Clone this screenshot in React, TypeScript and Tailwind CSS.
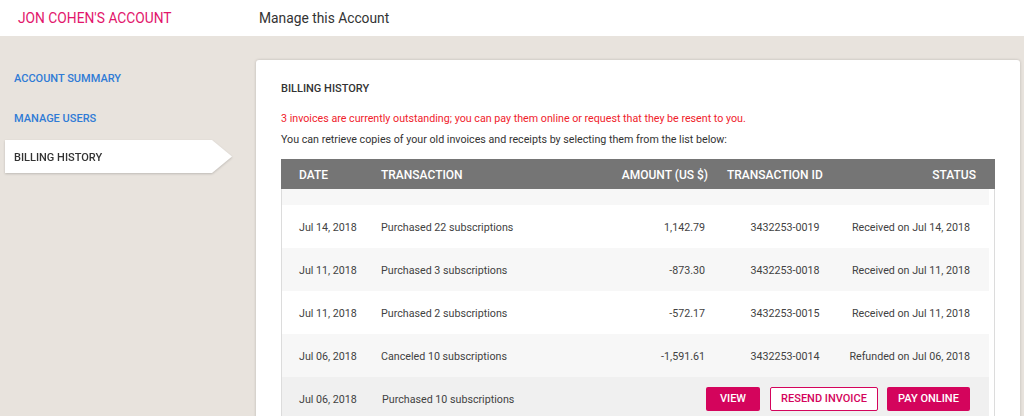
import React from "react";

const rows = [
  { date: "Jul 14, 2018", desc: "Purchased 22 subscriptions", amount: "1,142.79", id: "3432253-0019", status: "Received on Jul 14, 2018" },
  { date: "Jul 11, 2018", desc: "Purchased 3 subscriptions", amount: "-873.30", id: "3432253-0018", status: "Received on Jul 11, 2018" },
  { date: "Jul 11, 2018", desc: "Purchased 2 subscriptions", amount: "-572.17", id: "3432253-0015", status: "Received on Jul 11, 2018" },
  { date: "Jul 06, 2018", desc: "Canceled 10 subscriptions", amount: "-1,591.61", id: "3432253-0014", status: "Refunded on Jul 06, 2018" },
];

const cols = "grid grid-cols-[82px_227px_100px_19px_116px_1fr] items-center";

const App = () => {
  return (
    <div className="w-[1024px] h-[416px] overflow-hidden bg-[#e8e3dd] font-['Roboto','Liberation_Sans',sans-serif]">
      <div className="h-9 bg-white flex items-center">
        <div className="w-[259px] pl-[18px] text-[13.8px] text-[#e2156b]">JON COHEN'S ACCOUNT</div>
        <div className="text-[13.8px] text-[#333]">Manage this Account</div>
      </div>

      <div className="flex">
        <div className="w-[256px] shrink-0 pt-[23px]">
          <div className="h-10 flex items-center pl-[14px] text-[11px] font-medium text-[#2f7bd6]">ACCOUNT SUMMARY</div>
          <div className="h-10 flex items-center pl-[14px] text-[11px] font-medium text-[#2f7bd6]">MANAGE USERS</div>
          <div className="mt-[1px] ml-[5px] drop-shadow-[0_1px_1px_rgba(0,0,0,0.18)]">
            <div className="w-[227px] h-[33px] bg-white flex items-center pl-[9px] pt-[3px] text-[11px] font-medium text-[#333] [clip-path:polygon(0_0,207px_0,100%_50%,207px_100%,0_100%)]">
              BILLING HISTORY
            </div>
          </div>
        </div>

        <div className="mt-6 w-[764px] h-[400px] bg-white rounded-[3px] shadow-[0_0_3px_rgba(0,0,0,0.2)] pt-[21px] px-[25px]">
          <div className="text-[11px] leading-4 font-medium text-[#333]">BILLING HISTORY</div>
          <div className="mt-[14px] text-[10.7px] leading-4 text-[#f0222c]">
            3 invoices are currently outstanding; you can pay them online or request that they be resent to you.
          </div>
          <div className="mt-[5px] text-[10.7px] leading-4 text-[#333]">
            You can retrieve copies of your old invoices and receipts by selecting them from the list below:
          </div>

          <div className="mt-[11px]">
            <div className={`${cols} h-[30px] bg-[#757575] text-white text-[12px] font-medium pl-[18px] pr-[19px] pt-[2px]`}>
              <div>DATE</div>
              <div>TRANSACTION</div>
              <div className="text-right">AMOUNT (US $)</div>
              <div />
              <div>TRANSACTION ID</div>
              <div className="text-right">STATUS</div>
            </div>
            <div className="border-x border-[#dcdcdc] h-[300px]">
              <div className="mr-[5px] text-[10.7px] text-[#424242]">
                <div className="h-4 bg-[#f7f7f7]" />
                {rows.map((r, i) => (
                  <div
                    key={r.id}
                    className={`${cols} h-[43px] pl-[17px] pr-[19px] pt-1 ${i % 2 === 0 ? "bg-white" : "bg-[#f7f7f7]"}`}
                  >
                    <div>{r.date}</div>
                    <div>{r.desc}</div>
                    <div className="text-right pr-[3px]">{r.amount}</div>
                    <div />
                    <div className="text-center">{r.id}</div>
                    <div className="text-right">{r.status}</div>
                  </div>
                ))}
                <div className={`${cols} h-[43px] pl-[17px] pr-[19px] bg-[#f0f0f0]`}>
                  <div className="pt-1">Jul 06, 2018</div>
                  <div className="pl-px pt-1">Purchased 10 subscriptions</div>
                  <div className="col-span-4 flex justify-end items-center">
                    <button className="h-6 w-[54px] rounded-[2px] bg-[#d4045c] text-white text-[11px] font-medium pt-px">VIEW</button>
                    <button className="ml-[10px] h-6 w-[108px] rounded-[2px] border border-[#d4045c] bg-white text-[#d4045c] text-[11px] font-medium pt-px">
                      RESEND INVOICE
                    </button>
                    <button className="ml-[9px] h-6 w-[83px] rounded-[2px] bg-[#d4045c] text-white text-[11px] font-medium pt-px">PAY ONLINE</button>
                  </div>
                </div>
              </div>
            </div>
          </div>
        </div>
      </div>
    </div>
  );
};

export default App;
